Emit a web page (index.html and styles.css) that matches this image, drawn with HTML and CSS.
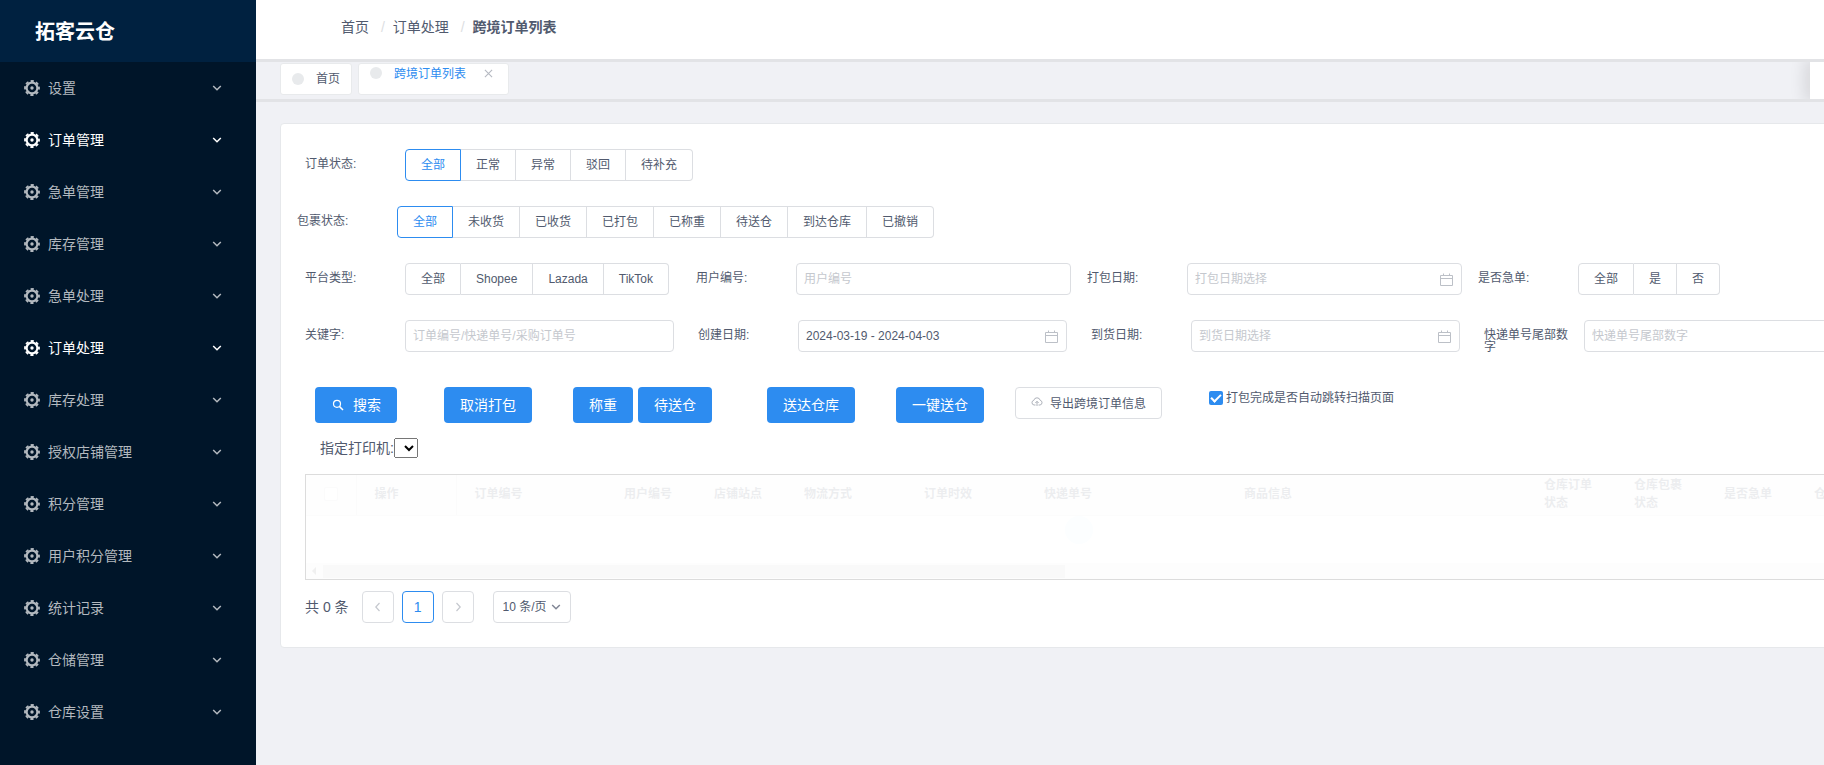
FILE: index.html
```html
<!DOCTYPE html>
<html lang="zh-CN">
<head>
<meta charset="utf-8">
<title>跨境订单列表</title>
<link rel="stylesheet" href="styles.css">
</head>
<body>
<svg class="sprite" aria-hidden="true">
  <symbol id="gear" viewBox="0 0 16 16"><circle cx="8" cy="8" r="5.4" fill="none" stroke="currentColor" stroke-width="2.2"/><circle cx="8" cy="8" r="7" fill="none" stroke="currentColor" stroke-width="1.8" stroke-dasharray="3.2 2.298" stroke-dashoffset="1.6"/><circle cx="8" cy="8" r="1.7" fill="currentColor"/></symbol>
  <symbol id="down" viewBox="0 0 10 10"><path d="M1.2 3l3.8 3.8L8.8 3" fill="none" stroke="currentColor" stroke-width="1.5"/></symbol>
  <symbol id="left" viewBox="0 0 10 10"><path d="M6.5 1L2.8 5l3.7 4" fill="none" stroke="currentColor" stroke-width="1.2"/></symbol>
  <symbol id="right" viewBox="0 0 10 10"><path d="M3.5 1l3.7 4-3.7 4" fill="none" stroke="currentColor" stroke-width="1.2"/></symbol>
  <symbol id="close" viewBox="0 0 10 10"><path d="M1 1l8 8M9 1L1 9" fill="none" stroke="currentColor" stroke-width="1.2"/></symbol>
  <symbol id="search" viewBox="0 0 12 12"><circle cx="5" cy="4.800" r="3.500" fill="none" stroke="currentColor" stroke-width="1.2"/><path d="M7.600 7.600l3.400 3.400" stroke="currentColor" stroke-width="1.500"/></symbol>
  <symbol id="calendar" viewBox="0 0 14 14"><path d="M1.500 2.500h12v10h-12zM1.500 5.500h12M4.500 .5v2M10.500 .5v2" fill="none" stroke="currentColor"/></symbol>
  <symbol id="cloud" viewBox="0 0 12 12"><path d="M4.500 9H3a2.400 2.400 0 0 1-.2-4.700 3.300 3.300 0 0 1 6.400 0A2.400 2.400 0 0 1 9 9H7.500M6 10V5.500M4.300 7L6 5.300 7.700 7" fill="none" stroke="currentColor" stroke-width=".8"/></symbol>
</svg>
<div class="app">
  <aside class="sidebar">
    <h1 class="logo">拓客云仓</h1>
    <nav class="menu">
      <a href="#" class="menu-item"><svg class="gear"><use href="#gear"/></svg><span>设置</span><svg class="arrow"><use href="#down"/></svg></a>
      <a href="#" class="menu-item open"><svg class="gear"><use href="#gear"/></svg><span>订单管理</span><svg class="arrow"><use href="#down"/></svg></a>
      <a href="#" class="menu-item"><svg class="gear"><use href="#gear"/></svg><span>急单管理</span><svg class="arrow"><use href="#down"/></svg></a>
      <a href="#" class="menu-item"><svg class="gear"><use href="#gear"/></svg><span>库存管理</span><svg class="arrow"><use href="#down"/></svg></a>
      <a href="#" class="menu-item"><svg class="gear"><use href="#gear"/></svg><span>急单处理</span><svg class="arrow"><use href="#down"/></svg></a>
      <a href="#" class="menu-item open"><svg class="gear"><use href="#gear"/></svg><span>订单处理</span><svg class="arrow"><use href="#down"/></svg></a>
      <a href="#" class="menu-item"><svg class="gear"><use href="#gear"/></svg><span>库存处理</span><svg class="arrow"><use href="#down"/></svg></a>
      <a href="#" class="menu-item"><svg class="gear"><use href="#gear"/></svg><span>授权店铺管理</span><svg class="arrow"><use href="#down"/></svg></a>
      <a href="#" class="menu-item"><svg class="gear"><use href="#gear"/></svg><span>积分管理</span><svg class="arrow"><use href="#down"/></svg></a>
      <a href="#" class="menu-item"><svg class="gear"><use href="#gear"/></svg><span>用户积分管理</span><svg class="arrow"><use href="#down"/></svg></a>
      <a href="#" class="menu-item"><svg class="gear"><use href="#gear"/></svg><span>统计记录</span><svg class="arrow"><use href="#down"/></svg></a>
      <a href="#" class="menu-item"><svg class="gear"><use href="#gear"/></svg><span>仓储管理</span><svg class="arrow"><use href="#down"/></svg></a>
      <a href="#" class="menu-item"><svg class="gear"><use href="#gear"/></svg><span>仓库设置</span><svg class="arrow"><use href="#down"/></svg></a>
    </nav>
  </aside>
  <div class="page">
    <header class="header">
      <nav class="breadcrumb"><a href="#">首页</a> <i>/</i><a href="#">订单处理</a> <i>/</i><b>跨境订单列表</b></nav>
    </header>
    <div class="tabs">
      <div class="tab-list">
        <a href="#" class="tab"><span class="dot"></span>首页</a>
        <div class="tab current"><span class="dot"></span><a href="#">跨境订单列表</a><button class="tab-close" aria-label="关闭"><svg><use href="#close"/></svg></button></div>
      </div>
      <div class="tab-extra"></div>
    </div>
    <main class="main">
      <section class="card">
        <form class="filters">
          <fieldset class="field">
            <legend class="label">订单状态:</legend>
            <div class="radios">
              <label><input type="radio" name="state" checked>全部</label><label><input type="radio" name="state">正常</label><label><input type="radio" name="state">异常</label><label><input type="radio" name="state">驳回</label><label><input type="radio" name="state">待补充</label>
            </div>
          </fieldset>
          <fieldset class="field outdent">
            <legend class="label">包裹状态:</legend>
            <div class="radios">
              <label><input type="radio" name="parcel" checked>全部</label><label><input type="radio" name="parcel">未收货</label><label><input type="radio" name="parcel">已收货</label><label><input type="radio" name="parcel">已打包</label><label><input type="radio" name="parcel">已称重</label><label><input type="radio" name="parcel">待送仓</label><label><input type="radio" name="parcel">到达仓库</label><label><input type="radio" name="parcel">已撤销</label>
            </div>
          </fieldset>
          <div class="columns">
            <fieldset class="field">
              <legend class="label">平台类型:</legend>
              <div class="radios">
                <label><input type="radio" name="platform">全部</label><label><input type="radio" name="platform">Shopee</label><label><input type="radio" name="platform">Lazada</label><label><input type="radio" name="platform">TikTok</label>
              </div>
            </fieldset>
            <div class="field"><label class="label" for="user">用户编号:</label><div class="control"><input id="user" type="text" placeholder="用户编号"></div></div>
            <div class="field"><label class="label" for="packed">打包日期:</label><div class="control"><input id="packed" type="text" placeholder="打包日期选择"><svg class="cal"><use href="#calendar"/></svg></div></div>
            <fieldset class="field">
              <legend class="label">是否急单:</legend>
              <div class="radios">
                <label><input type="radio" name="urgent">全部</label><label><input type="radio" name="urgent">是</label><label><input type="radio" name="urgent">否</label>
              </div>
            </fieldset>
          </div>
          <div class="columns wide">
            <div class="field"><label class="label" for="keyword">关键字:</label><div class="control"><input id="keyword" type="text" placeholder="订单编号/快递单号/采购订单号"></div></div>
            <div class="field"><label class="label" for="created">创建日期:</label><div class="control"><input id="created" type="text" value="2024-03-19 - 2024-04-03"><svg class="cal"><use href="#calendar"/></svg></div></div>
            <div class="field"><label class="label" for="arrived">到货日期:</label><div class="control"><input id="arrived" type="text" placeholder="到货日期选择"><svg class="cal"><use href="#calendar"/></svg></div></div>
            <div class="field"><label class="label" for="tail">快递单号尾部数字</label><div class="control"><input id="tail" type="text" placeholder="快递单号尾部数字"></div></div>
          </div>
        </form>
        <div class="actions">
          <div class="action-group"><button class="btn primary"><svg class="search"><use href="#search"/></svg>搜索</button></div>
          <div class="action-group"><button class="btn primary">取消打包</button></div>
          <div class="action-group pair"><button class="btn primary">称重</button><button class="btn primary">待送仓</button></div>
          <div class="action-group"><button class="btn primary">送达仓库</button></div>
          <div class="action-group"><button class="btn primary">一键送仓</button></div>
          <div class="action-group"><button class="btn export"><svg class="cloud"><use href="#cloud"/></svg>导出跨境订单信息</button></div>
          <label class="check"><input type="checkbox" checked><span>打包完成是否自动跳转扫描页面</span></label>
        </div>
        <div class="printer"><label for="printer">指定打印机:</label><select id="printer"><option></option></select></div>
        <div class="table-box">
          <table class="table">
            <colgroup><col class="w50"><col class="w100"><col class="w150"><col class="w90"><col class="w90"><col class="w120"><col class="w120"><col class="w200"><col class="w300"><col class="w90"><col class="w90"><col class="w90"><col class="w90"></colgroup>
            <thead><tr><th><input type="checkbox" aria-label="全选"></th><th>操作</th><th>订单编号</th><th>用户编号</th><th>店铺站点</th><th>物流方式</th><th>订单时效</th><th>快递单号</th><th>商品信息</th><th>仓库订单状态</th><th>仓库包裹状态</th><th>是否急单</th><th>仓库</th></tr></thead>
          </table>
          <div class="loading"><span class="spinner"></span></div>
          <div class="scroll"><span class="scroll-arrow"></span><span class="scroll-thumb"></span></div>
        </div>
        <div class="pager">
          <span class="total">共 0 条</span>
          <button class="page-btn" aria-label="上一页"><svg><use href="#left"/></svg></button>
          <button class="page-btn on">1</button>
          <button class="page-btn" aria-label="下一页"><svg><use href="#right"/></svg></button>
          <div class="size"><select aria-label="每页条数"><option>10 条/页</option></select><svg><use href="#down"/></svg></div>
        </div>
      </section>
    </main>
  </div>
</div>
</body>
</html>
```
FILE: styles.css
```css
* { box-sizing: border-box; }
body {
  margin: 0;
  overflow: hidden;
  background: #f0f1f5;
  color: #515a6e;
  font: 12px/18px "Liberation Sans", "Noto Sans CJK SC", sans-serif;
}
a { color: inherit; text-decoration: none; }
button, input, select { font-family: inherit; color: inherit; }
.sprite { display: none; }
.app { display: flex; min-height: 100vh; }

.sidebar { flex: 0 0 256px; background: #001529; }
.logo {
  margin: 0;
  padding: 2px 35px 0;
  background: #002140;
  color: #fff;
  font-size: 20px;
  line-height: 60px;
}
.menu-item {
  display: flex;
  align-items: center;
  height: 52px;
  padding: 0 34px 0 24px;
  color: #b3b9bf;
  font-size: 14px;
}
.menu-item.open { color: #fff; }
.menu-item span { flex: 1; padding-left: 8px; }
.gear { width: 16px; height: 16px; }
.arrow { width: 10px; height: 10px; }

.page { flex: 1; min-width: 0; overflow: hidden; }
.header {
  height: 62px;
  padding: 18px 85px;
  background: #fff;
  border-bottom: 3px solid #e2e3e6;
}
.breadcrumb { font-size: 14px; line-height: 18px; }
.breadcrumb i { margin: 0 8px; color: #dcdee2; font-style: normal; }
.tabs {
  display: flex;
  justify-content: space-between;
  height: 40px;
  border-bottom: 3px solid #e2e3e6;
  overflow: hidden;
}
.tab-list { display: flex; gap: 6px; padding: 1px 0 0 24px; }
.tab {
  display: flex;
  align-items: center;
  height: 32px;
  padding: 0 11px;
  background: #fff;
  border: 1px solid #e8eaec;
  border-radius: 3px;
}
.tab.current { align-items: flex-start; padding-top: 1px; color: #2d8cf0; }
.tab.current .dot { margin-top: 2px; }
.dot {
  width: 12px;
  height: 12px;
  margin-right: 12px;
  background: #e8eaec;
  border-radius: 50%;
}
.tab-close {
  display: flex;
  margin: 4px 4px 0 18px;
  padding: 0;
  background: none;
  border: 0;
  color: #b5b9c1;
}
.tab-close svg { width: 9px; height: 9px; }
.tab-extra { width: 14px; background: #fff; box-shadow: -3px 0 15px 3px rgba(0, 0, 0, .1); }

.main { padding: 21px 0 21px 24px; }
.card {
  margin-right: -54px;
  padding: 25px 24px 24px;
  background: #fff;
  border: 1px solid #e6e8eb;
  border-radius: 4px;
}
.field { display: flex; min-width: 0; margin: 0 0 25px; padding: 0; border: 0; }
.field.outdent { margin-left: -8px; }
.label {
  float: left;
  flex: 0 0 100px;
  width: 100px;
  padding: 9px 12px 0 0;
  line-height: 12px;
}
.columns { display: grid; grid-template-columns: repeat(4, minmax(0, 1fr)); column-gap: 16px; }
.columns.wide { column-gap: 24px; }
.radios { display: flex; }
.radios label {
  height: 32px;
  padding: 0 15px;
  border: 1px solid #dcdee2;
  border-left: 0;
  line-height: 30px;
}
.radios label:first-child { border-left: 1px solid #dcdee2; border-radius: 4px 0 0 4px; }
.radios label:last-child { border-radius: 0 4px 4px 0; }
.radios label:has(:checked) { border-color: #2d8cf0; color: #2d8cf0; }
.radios input { position: absolute; opacity: 0; }
.control { position: relative; flex: 1; min-width: 0; }
.control input {
  display: block;
  width: 100%;
  height: 32px;
  padding: 0 7px;
  background: #fff;
  border: 1px solid #dcdee2;
  border-radius: 4px;
  font-size: 12px;
}
.control input::placeholder { color: #c5c8ce; }
.cal { position: absolute; top: 10px; right: 9px; width: 14px; height: 14px; color: #bcc0c7; }

.actions { display: flex; align-items: flex-start; padding: 9px 0 0 10px; }
.action-group { display: flex; gap: 5px; margin-right: 41px; }
.action-group:first-child { margin-right: 47px; }
.action-group.pair { margin-right: 55px; }
.action-group:nth-child(5) { margin-right: 31px; }
.action-group:nth-child(6) { margin-right: 47px; }
.btn {
  display: flex;
  align-items: center;
  padding: 0 15px 2px;
  border: 1px solid #dcdee2;
  border-radius: 4px;
  background: #fff;
}
.btn.primary { height: 36px; padding: 0 16px 2px; border: 0; background: #2d8cf0; color: #fff; font-size: 14px; }
.btn.export { height: 32px; font-size: 12px; }
.search { width: 12px; height: 12px; margin: 1px 9px 0 1px; }
.cloud { width: 12px; height: 12px; margin-right: 7px; color: #9a9fa9; }
.check { display: flex; align-items: center; gap: 3px; padding-top: 2px; }
.check input {
  display: grid;
  place-items: center;
  appearance: none;
  width: 14px;
  height: 14px;
  margin: 0;
  background: #2d8cf0;
  border-radius: 2px;
}
.check input::after {
  content: "";
  width: 4px;
  height: 8px;
  margin-bottom: 2px;
  border: solid #fff;
  border-width: 0 2px 2px 0;
  transform: rotate(45deg);
}
.printer {
  display: flex;
  align-items: center;
  margin-top: 14px;
  padding-left: 15px;
  font-size: 14px;
  line-height: 22px;
}
.printer select { width: 24px; height: 20px; color: #000; }

.table-box { height: 106px; margin-top: 15px; border: 1px solid #dcdcdc; overflow: hidden; display: flex; flex-direction: column; }
.table { width: 1570px; table-layout: fixed; border-collapse: collapse; opacity: .1; }
.table th {
  height: 40px;
  padding: 0 18px 2px;
  background: #f8f8f9;
  border-bottom: 1px solid #e8eaec;
  text-align: left;
  line-height: 18px;
}
.table th:nth-child(-n+2) { border-right: 1px solid #dcdee2; }
.table th input {
  display: block;
  appearance: none;
  width: 14px;
  height: 14px;
  margin: 0;
  background: #fff;
  border: 1px solid #dcdee2;
  border-radius: 2px;
}
.w50 { width: 50px; }
.w90 { width: 90px; }
.w100 { width: 100px; }
.w120 { width: 120px; }
.w150 { width: 150px; }
.w200 { width: 200px; }
.w300 { width: 300px; }
.loading { flex: 1; display: grid; justify-content: center; }
.spinner { width: 28px; height: 28px; background: #fcfeff; border-radius: 50%; }
.scroll { display: flex; align-items: center; height: 16px; background: #fdfdfd; }
.scroll-arrow { margin: 0 7px 0 6px; border: solid transparent; border-width: 4px 4px 4px 0; border-right-color: #f0f0f0; }
.scroll-thumb { width: 48%; height: 13px; background: #f9f9f9; }

.pager { display: flex; align-items: center; gap: 8px; margin-top: 11px; }
.total { margin-right: 5px; font-size: 14px; }
.page-btn {
  display: grid;
  place-items: center;
  width: 32px;
  height: 32px;
  padding: 0;
  background: #fff;
  border: 1px solid #dcdee2;
  border-radius: 4px;
  color: #c5c8ce;
  font-size: 14px;
}
.page-btn.on { border-color: #2d8cf0; color: #2d8cf0; }
.page-btn svg { width: 10px; height: 10px; }
.size { position: relative; margin-left: 11px; }
.size select {
  appearance: none;
  display: block;
  width: 78px;
  height: 32px;
  padding: 0 24px 0 9px;
  background: #fff;
  border: 1px solid #dcdee2;
  border-radius: 4px;
  font-size: 12px;
}
.size svg { position: absolute; top: 11px; right: 10px; width: 10px; height: 10px; color: #808695; pointer-events: none; }
```
